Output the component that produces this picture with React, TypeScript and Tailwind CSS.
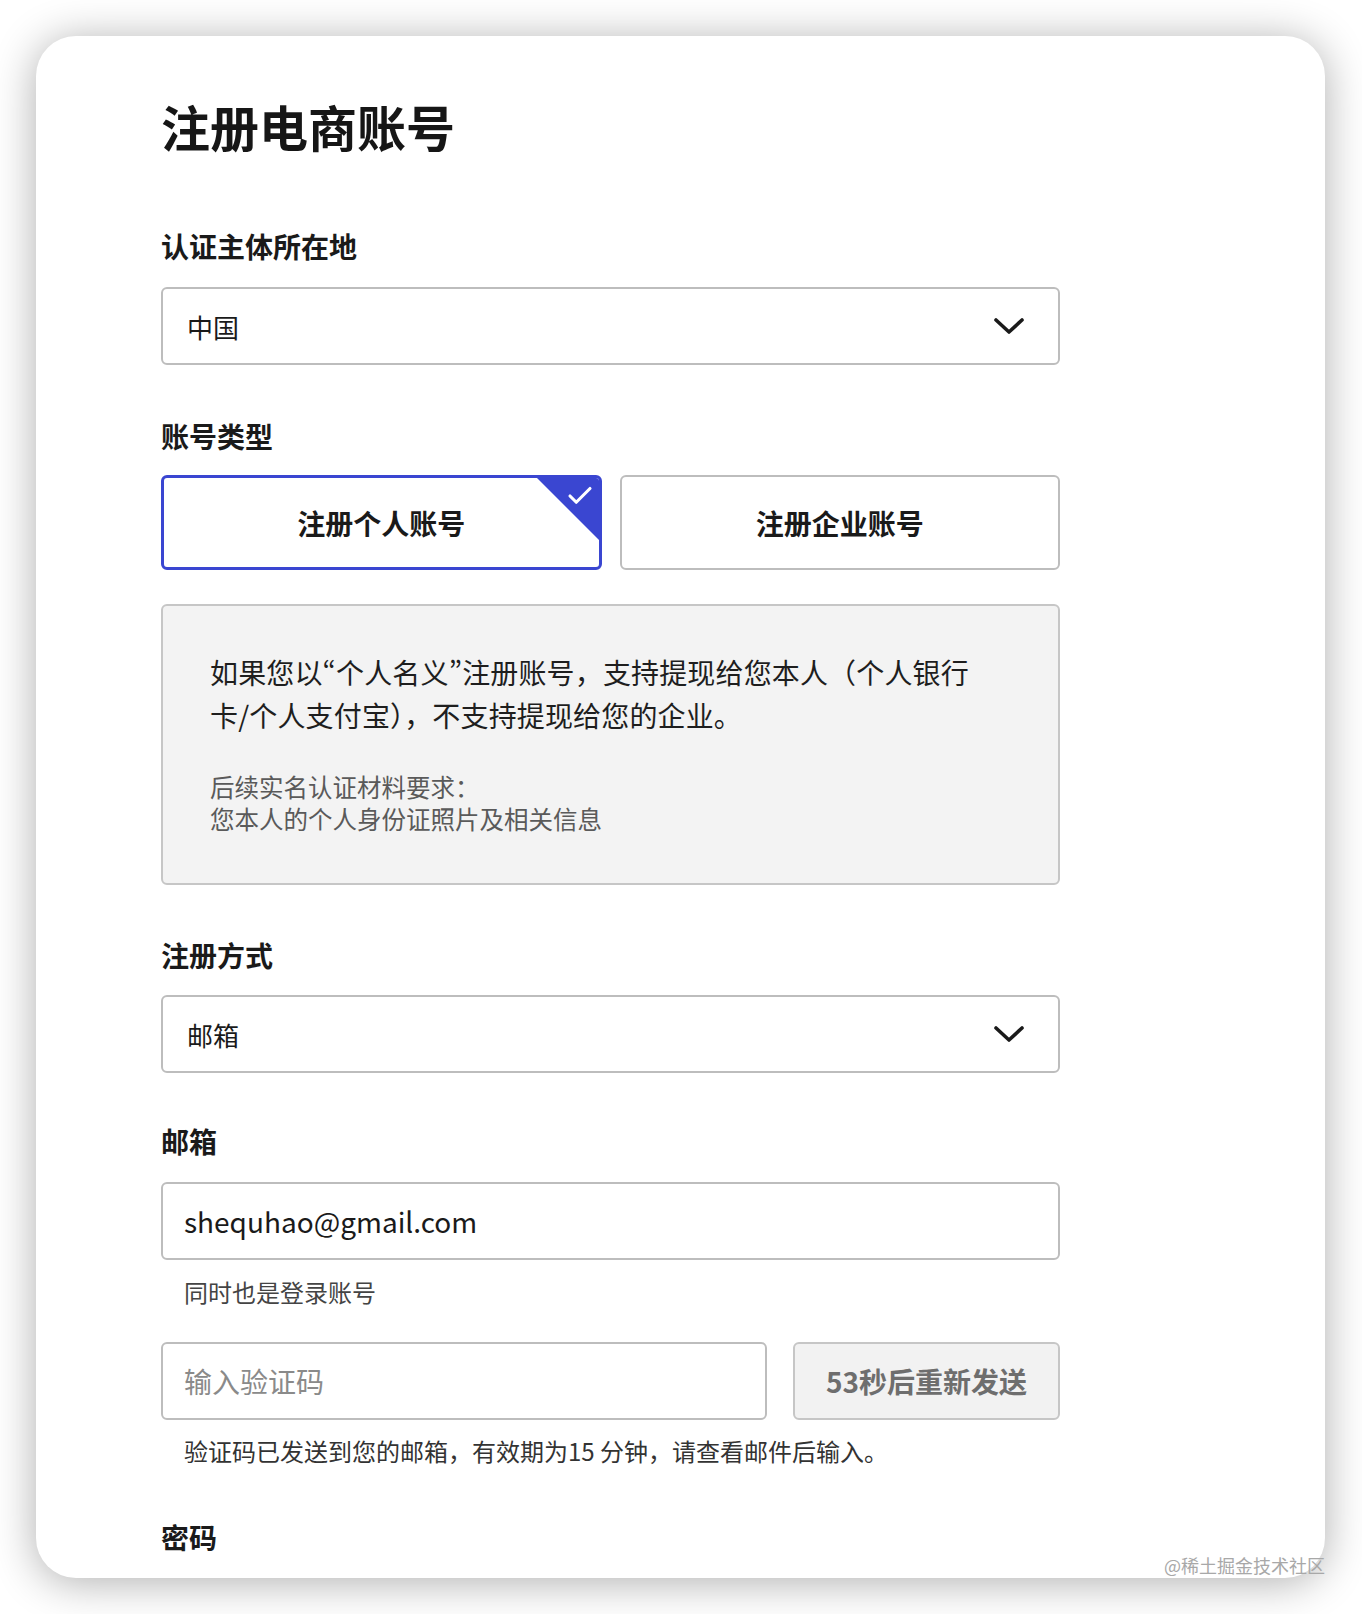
import { Check } from 'lucide-react';

const font = { fontFamily: '"Noto Sans CJK SC", "Noto Sans", sans-serif' };

function Chevron() {
  return (
    <svg width="30" height="18" viewBox="0 0 30 18" className="shrink-0">
      <polyline points="2,3 15,15 28,3" fill="none" stroke="#1a1a1a" strokeWidth="3.6" strokeLinecap="round" strokeLinejoin="round" />
    </svg>
  );
}

function SelectBox({ value, className }: { value: string; className?: string }) {
  return (
    <div className={`flex items-center justify-between h-[78px] rounded-[6px] border-2 border-[#bdbdbd] bg-white pl-[24px] pr-[34px] ${className ?? ''}`}>
      <span className="text-[26px] text-[#1a1a1a]">{value}</span>
      <Chevron />
    </div>
  );
}

function Label({ text, className }: { text: string; className?: string }) {
  return <div className={`text-[28px] leading-[36px] font-bold text-[#1a1a1a] ${className ?? ''}`}>{text}</div>;
}

export default function App() {
  return (
    <div className="relative h-[1614px] w-[1362px] bg-white pt-[36px] pl-[36px]" style={font}>
      <div className="h-[1542px] w-[1289px] overflow-hidden rounded-[40px] bg-white pl-[125px] pt-[62px] shadow-[0_4px_44px_rgba(0,0,0,0.32)]">
        <div className="w-[899px]">
          <h1 className="text-[49px] leading-[56px] font-bold text-[#161616]">注册电商账号</h1>

          <Label text="认证主体所在地" className="mt-[74px]" />
          <SelectBox value="中国" className="mt-[23px]" />

          <Label text="账号类型" className="mt-[53px]" />
          <div className="mt-[21px] grid grid-cols-2 gap-[18px]">
            <div className="relative flex h-[95px] items-center justify-center overflow-hidden rounded-[6px] border-[3px] border-[#3a46d1] bg-white">
              <span className="text-[28px] font-bold text-[#1a1a1a]">注册个人账号</span>
              <div className="absolute right-0 top-0 h-[62px] w-[62px]">
                <svg width="62" height="62" viewBox="0 0 62 62" className="absolute inset-0">
                  <polygon points="0,0 62,0 62,62" fill="#3a46d1" />
                </svg>
                <Check className="absolute right-[4px] top-[3px] h-[30px] w-[30px] text-white" strokeWidth={2.5} />
              </div>
            </div>
            <div className="flex h-[95px] items-center justify-center rounded-[6px] border-2 border-[#bdbdbd] bg-white">
              <span className="text-[28px] font-bold text-[#1a1a1a]">注册企业账号</span>
            </div>
          </div>

          <div className="mt-[34px] h-[281px] rounded-[6px] border-2 border-[#c6c6c6] bg-[#f3f3f3] pl-[47px] pt-[45px]">
            <p className="w-[790px] text-[28px] leading-[43px] tracking-[0.15px] text-[#1e1e1e]">
              如果您以<span className="[font-feature-settings:'pwid']">“</span>个人名义<span className="[font-feature-settings:'pwid']">”</span>注册账号，支持提现给您本人（个人银行卡/个人支付宝），不支持提现给您的企业。
            </p>
            <div className="mt-[34px] text-[24.5px] leading-[32px] text-[#5a5a5a]">
              <div>后续实名认证材料要求：</div>
              <div>您本人的个人身份证照片及相关信息</div>
            </div>
          </div>

          <Label text="注册方式" className="mt-[52px]" />
          <SelectBox value="邮箱" className="mt-[22px]" />

          <Label text="邮箱" className="mt-[50px]" />
          <div className="mt-[23px] flex h-[78px] items-center rounded-[6px] border-2 border-[#bdbdbd] bg-white pl-[21px]">
            <span className="text-[28px] text-[#1a1a1a]">shequhao@gmail.com</span>
          </div>
          <div className="mt-[16px] pl-[23px] text-[24px] leading-[32px] text-[#444]">同时也是登录账号</div>

          <div className="mt-[34px] flex gap-[26px]">
            <div className="flex h-[78px] w-[606px] items-center rounded-[6px] border-2 border-[#bdbdbd] bg-white pl-[21px]">
              <span className="text-[28px] text-[#8a8a8a]">输入验证码</span>
            </div>
            <div className="flex h-[78px] flex-1 items-center justify-center rounded-[6px] border-2 border-[#c6c6c6] bg-[#f2f2f2]">
              <span className="text-[28px] font-bold text-[#6e6e6e]">53秒后重新发送</span>
            </div>
          </div>
          <div className="mt-[15px] pl-[23px] text-[24px] leading-[32px] text-[#333]">验证码已发送到您的邮箱，有效期为15 分钟，请查看邮件后输入。</div>

          <Label text="密码" className="mt-[52px]" />
        </div>
      </div>
      <div className="absolute left-[1164px] top-[1553px] text-[18px] leading-[24px] text-[#a8a8a8]">@稀土掘金技术社区</div>
    </div>
  );
}
